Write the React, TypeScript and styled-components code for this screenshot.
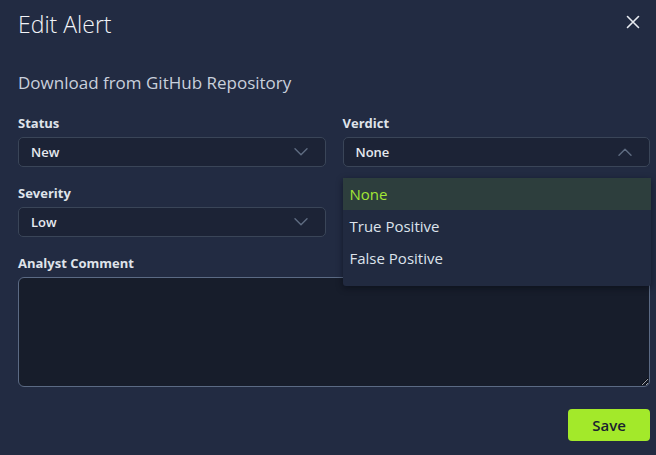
import React, { useState } from "react";
import styled, { createGlobalStyle } from "styled-components";

const GlobalStyle = createGlobalStyle`
  * { box-sizing: border-box; }
  html, body {
    margin: 0;
    background: #222b42;
    font-family: "Open Sans", "Noto Sans", sans-serif;
  }
`;

type Option = { value: string; label: string };

const statusOptions: Option[] = [
  { value: "new", label: "New" },
  { value: "in_progress", label: "In Progress" },
  { value: "closed", label: "Closed" },
];

const severityOptions: Option[] = [
  { value: "low", label: "Low" },
  { value: "medium", label: "Medium" },
  { value: "high", label: "High" },
];

const verdictOptions: Option[] = [
  { value: "none", label: "None" },
  { value: "tp", label: "True Positive" },
  { value: "fp", label: "False Positive" },
];

const Chevron = ({ up }: { up?: boolean }) => (
  <svg width="14" height="8" viewBox="0 0 14 8" fill="none">
    <polyline
      points={up ? "1,7.2 7,1.2 13,7.2" : "1,0.8 7,6.8 13,0.8"}
      stroke="#5f6c82"
      strokeWidth="1.4"
      strokeLinecap="round"
      strokeLinejoin="round"
    />
  </svg>
);

const CloseIcon = () => (
  <svg width="14" height="14" viewBox="0 0 14 14" fill="none">
    <path d="M1.5 1.5 L12.5 12.5 M12.5 1.5 L1.5 12.5" stroke="#e8ebf1" strokeWidth="1.6" strokeLinecap="round" />
  </svg>
);

type SelectProps = {
  options: Option[];
  value: string;
  open?: boolean;
  onToggle?: () => void;
  onPick?: (v: string) => void;
};

const Select = ({ options, value, open, onToggle, onPick }: SelectProps) => {
  const current = options.find((o) => o.value === value);
  return (
    <SelectWrap>
      <SelectButton type="button" onClick={onToggle}>
        <span>{current?.label}</span>
        <Chevron up={open} />
      </SelectButton>
      {open && (
        <Menu>
          {options.map((o) => (
            <MenuItem key={o.value} selected={o.value === value} onClick={() => onPick?.(o.value)}>
              {o.label}
            </MenuItem>
          ))}
        </Menu>
      )}
    </SelectWrap>
  );
};

const App = () => {
  const [status, setStatus] = useState("new");
  const [severity, setSeverity] = useState("low");
  const [verdict, setVerdict] = useState("none");
  const [verdictOpen, setVerdictOpen] = useState(true);
  const [comment, setComment] = useState("");

  return (
    <>
      <GlobalStyle />
      <Modal>
        <Header>
          <Title>Edit Alert</Title>
          <CloseButton type="button" aria-label="Close">
            <CloseIcon />
          </CloseButton>
        </Header>

        <Subtitle>Download from GitHub Repository</Subtitle>

        <FieldGrid>
          <Field>
            <Label>Status</Label>
            <Select options={statusOptions} value={status} onPick={setStatus} />
          </Field>
          <Field>
            <Label>Verdict</Label>
            <Select
              options={verdictOptions}
              value={verdict}
              open={verdictOpen}
              onToggle={() => setVerdictOpen(!verdictOpen)}
              onPick={(v) => {
                setVerdict(v);
                setVerdictOpen(false);
              }}
            />
          </Field>
          <Field>
            <Label>Severity</Label>
            <Select options={severityOptions} value={severity} onPick={setSeverity} />
          </Field>
          <Field />
          <Field wide>
            <Label>Analyst Comment</Label>
            <CommentBox value={comment} onChange={(e) => setComment(e.target.value)} />
          </Field>
        </FieldGrid>

        <Footer>
          <SaveButton type="button">Save</SaveButton>
        </Footer>
      </Modal>
    </>
  );
};

const Modal = styled.div`
  width: 656px;
  height: 455px;
  padding: 0 6px 0 18px;
  background: #222b42;
  color: #e4e8ef;
  overflow: hidden;
`;

const Header = styled.div`
  display: flex;
  align-items: center;
  justify-content: space-between;
  height: 48px;
  padding-bottom: 1px;
`;

const Title = styled.h2`
  margin: 0;
  font-size: 23px;
  font-weight: 300;
  color: #f2f4f8;
`;

const CloseButton = styled.button`
  display: flex;
  align-items: center;
  justify-content: center;
  margin: 0 10px 3px 0;
  padding: 0;
  border: none;
  background: none;
  cursor: pointer;
`;

const Subtitle = styled.p`
  margin: 23px 0 0;
  font-size: 17px;
  line-height: 24px;
  color: #c9d0dc;
`;

const FieldGrid = styled.div`
  display: grid;
  grid-template-columns: 1fr 1fr;
  column-gap: 17px;
  row-gap: 18px;
  margin-top: 20px;
`;

const Field = styled.div<{ wide?: boolean }>`
  display: flex;
  flex-direction: column;
  gap: 6px;
  grid-column: ${({ wide }) => (wide ? "1 / -1" : "auto")};
`;

const Label = styled.label`
  font-size: 13px;
  line-height: 16px;
  font-weight: 700;
  color: #dfe3ea;
`;

const SelectWrap = styled.div`
  position: relative;
`;

const SelectButton = styled.button`
  display: flex;
  align-items: center;
  justify-content: space-between;
  width: 100%;
  height: 30px;
  padding: 0 17px 0 12px;
  background: #1c2336;
  border: 1px solid #3a4558;
  border-radius: 5px;
  font-family: inherit;
  font-size: 13px;
  font-weight: 600;
  color: #e6e9ef;
  cursor: pointer;
`;

const Menu = styled.div`
  position: absolute;
  top: 41px;
  left: 0;
  right: -1px;
  z-index: 10;
  padding-bottom: 12px;
  background: #212a40;
  box-shadow: 0 2px 6px rgba(5, 9, 18, 0.55);
  border-radius: 3px;
`;

const MenuItem = styled.div<{ selected?: boolean }>`
  height: 32px;
  padding-left: 7px;
  display: flex;
  align-items: center;
  font-size: 15px;
  color: ${({ selected }) => (selected ? "#a3e635" : "#dde3ec")};
  background: ${({ selected }) => (selected ? "#2d3e3d" : "transparent")};
  cursor: pointer;
`;

const CommentBox = styled.textarea`
  width: 100%;
  height: 110px;
  padding: 8px 12px;
  background: #171d2b;
  border: 1px solid #5b6a84;
  border-radius: 6px;
  font-family: inherit;
  font-size: 13px;
  color: #e6e9ef;
  outline: none;
`;

const Footer = styled.div`
  display: flex;
  justify-content: flex-end;
  margin-top: 22px;
`;

const SaveButton = styled.button`
  width: 82px;
  height: 32px;
  background: #a3e92a;
  border: none;
  border-radius: 4px;
  font-family: inherit;
  font-size: 15px;
  font-weight: 600;
  color: #1b2230;
  cursor: pointer;
`;

export default App;
